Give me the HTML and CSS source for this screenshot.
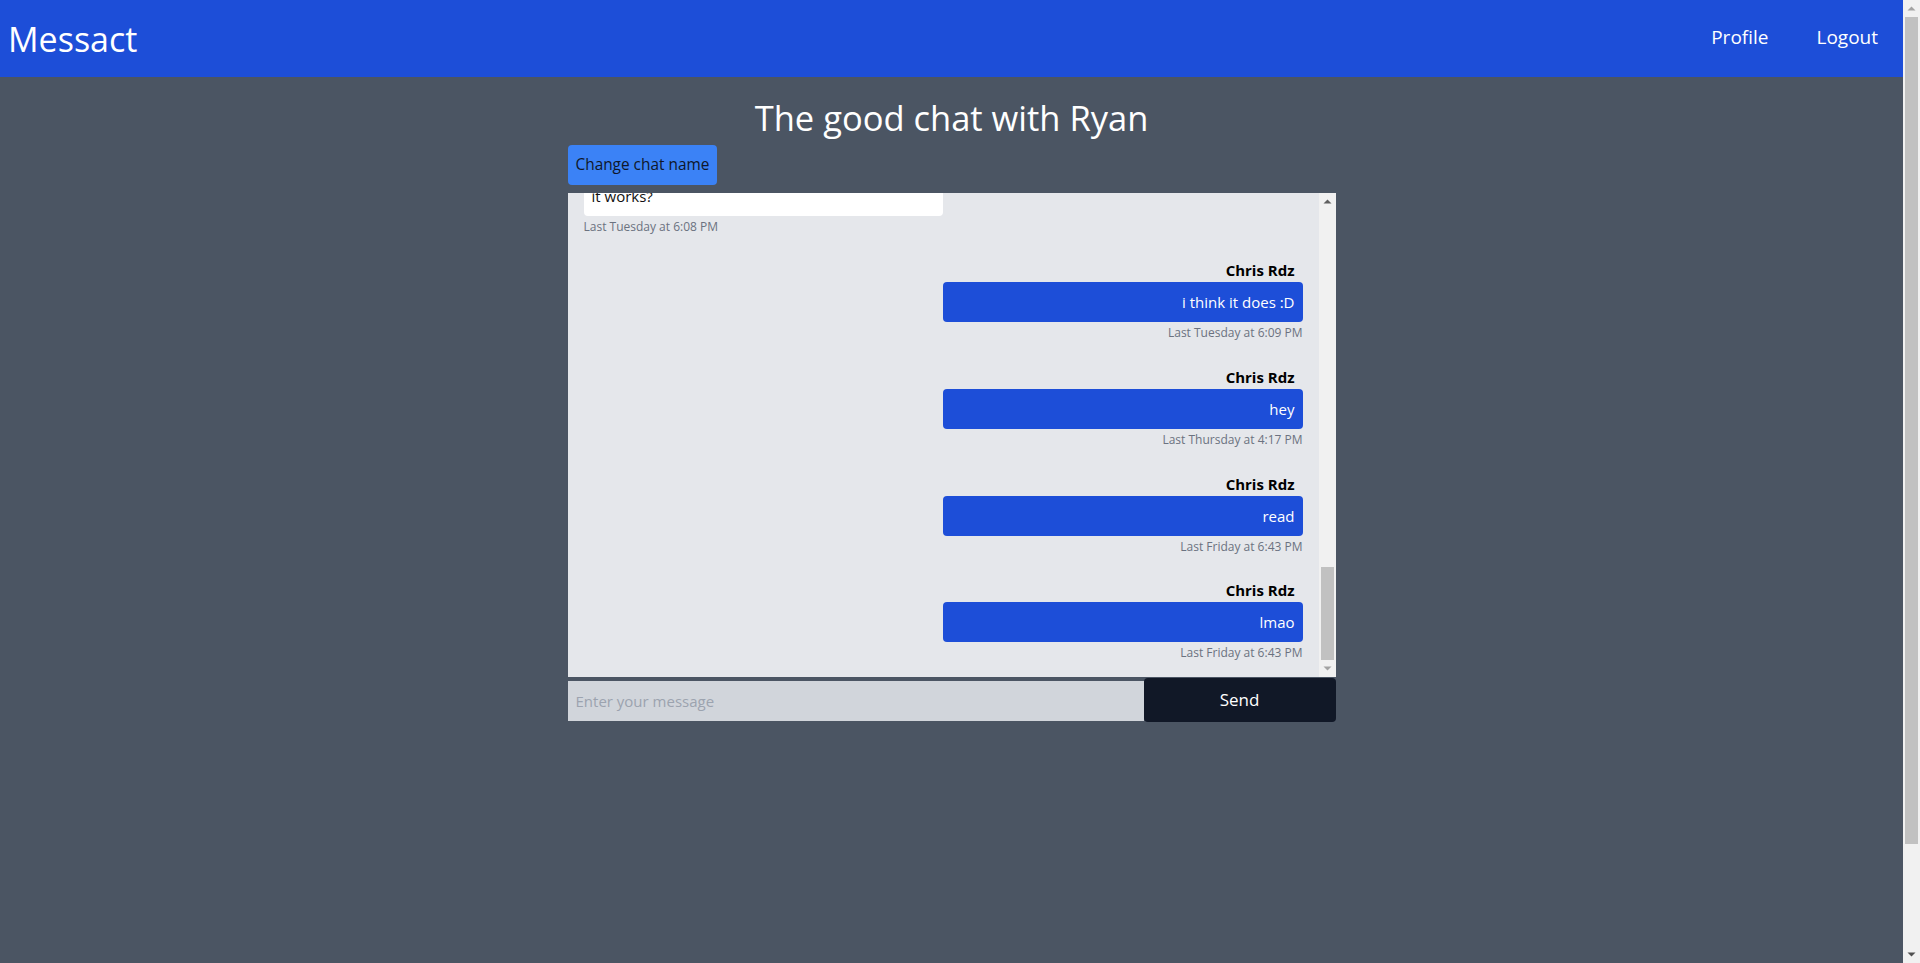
FILE: index.html
```html
<!DOCTYPE html>
<html lang="en">
<head>
<meta charset="utf-8">
<title>Messact</title>
<link rel="stylesheet" href="styles.css">
</head>
<body>
<div class="app">
  <nav class="navbar">
    <a class="brand" href="#">Messact</a>
    <div class="nav-links">
      <a class="nav-link" href="#">Profile</a>
      <a class="nav-link" href="#">Logout</a>
    </div>
  </nav>
  <main class="page">
    <h1 class="chat-title">The good chat with Ryan</h1>
    <section class="chat">
      <button class="rename-btn" type="button">Change chat name</button>
      <div class="messages-frame">
        <div class="messages">
          <div class="messages-inner">
            <div class="msg theirs"><div class="bubble">it works?</div><div class="msg-time">Last Tuesday at 6:08 PM</div></div>
            <div class="msg mine"><div class="msg-name">Chris Rdz</div><div class="bubble">i think it does :D</div><div class="msg-time">Last Tuesday at 6:09 PM</div></div>
            <div class="msg mine"><div class="msg-name">Chris Rdz</div><div class="bubble">hey</div><div class="msg-time">Last Thursday at 4:17 PM</div></div>
            <div class="msg mine"><div class="msg-name">Chris Rdz</div><div class="bubble">read</div><div class="msg-time">Last Friday at 6:43 PM</div></div>
            <div class="msg mine"><div class="msg-name">Chris Rdz</div><div class="bubble">lmao</div><div class="msg-time">Last Friday at 6:43 PM</div></div>
          </div>
        </div>
        <div class="scrollbar inner-bar" aria-hidden="true">
          <svg class="sb-btn" width="17" height="17" viewBox="0 0 17 17"><polygon points="4.5,10.5 8.5,6.5 12.5,10.5" fill="#606060"/></svg>
          <div class="sb-track"></div>
          <div class="sb-thumb inner-thumb"></div>
          <svg class="sb-btn" width="17" height="17" viewBox="0 0 17 17"><polygon points="4.5,6.5 8.5,10.5 12.5,6.5" fill="#a3a3a3"/></svg>
        </div>
      </div>
      <form class="composer">
        <input class="composer-input" type="text" placeholder="Enter your message">
        <button class="send-btn" type="button">Send</button>
      </form>
    </section>
  </main>
</div>
<div class="scrollbar page-bar" aria-hidden="true">
  <svg class="sb-btn" width="17" height="17" viewBox="0 0 17 17"><polygon points="4.5,10.5 8.5,6.5 12.5,10.5" fill="#a3a3a3"/></svg>
  <div class="sb-thumb page-thumb"></div>
  <div class="sb-track"></div>
  <svg class="sb-btn" width="17" height="17" viewBox="0 0 17 17"><polygon points="4.5,6.5 8.5,10.5 12.5,6.5" fill="#505050"/></svg>
</div>
</body>
</html>
```
FILE: styles.css
```css
* { box-sizing: border-box; }

html, body {
  margin: 0;
  padding: 0;
}

body {
  background: #4b5563;
  font-family: "Open Sans", "Noto Sans", "Liberation Sans", sans-serif;
  color: #111827;
  display: flex;
  height: 963px;
  overflow: hidden;
}

.app {
  flex: 1;
  min-width: 0;
  display: flex;
  flex-direction: column;
}

/* drawn scrollbars (classic style) */
.scrollbar {
  width: 17px;
  flex-shrink: 0;
  background: #f1f1f1;
  display: flex;
  flex-direction: column;
}
.sb-btn {
  display: block;
  flex-shrink: 0;
}
.sb-track { flex: 1; }
.sb-thumb {
  flex-shrink: 0;
  margin: 0 2px;
  background: #c1c1c1;
}
.page-thumb { height: 827px; }
.inner-thumb { height: 93px; }

/* navbar */
.navbar {
  height: 77px;
  flex-shrink: 0;
  background: #1d4ed8;
  display: flex;
  align-items: center;
  justify-content: space-between;
  padding-left: 8px;
}
.brand {
  color: #ffffff;
  text-decoration: none;
  font-size: 34px;
  line-height: 40px;
}
.nav-links {
  display: flex;
  align-items: center;
  padding-right: 1px;
}
.nav-link {
  color: #ffffff;
  text-decoration: none;
  font-size: 19px;
  line-height: 28px;
  padding: 0 24px;
  margin-top: -3px;
}

/* page */
.page {
  flex: 1;
}
.chat-title {
  margin: 21px 0 0;
  text-align: center;
  color: #ffffff;
  font-weight: 400;
  font-size: 34.5px;
  line-height: 40px;
}
.chat {
  width: 768px;
  margin: 0 auto;
  display: flex;
  flex-direction: column;
  align-items: flex-start;
}
.rename-btn {
  margin-top: 7px;
  background: #3b82f6;
  color: #0f172a;
  border: none;
  border-radius: 4px;
  padding: 8px;
  font-family: inherit;
  font-size: 15.4px;
  line-height: 24px;
  cursor: pointer;
}

/* messages */
.messages-frame {
  margin-top: 8px;
  width: 100%;
  height: 484px;
  display: flex;
  background: #e5e7eb;
}
.messages {
  flex: 1;
  min-width: 0;
  overflow: hidden;
  display: flex;
  flex-direction: column-reverse;
}
.messages-inner {
  padding: 16px 16px 14px;
  display: flex;
  flex-direction: column;
  gap: 22px;
  flex-shrink: 0;
}
.msg {
  display: flex;
  flex-direction: column;
}
.msg.mine { align-items: flex-end; text-align: right; }
.msg.theirs { align-items: flex-start; text-align: left; }
.msg-name {
  font-weight: 700;
  font-size: 15px;
  line-height: 24px;
  padding: 0 8px;
  color: #000000;
}
.bubble {
  width: 50%;
  padding: 8px;
  border-radius: 4px;
  font-size: 15px;
  line-height: 24px;
}
.mine .bubble {
  background: #1d4ed8;
  color: #ffffff;
}
.theirs .bubble {
  background: #ffffff;
  color: #111111;
}
.msg-time {
  margin-top: 2px;
  font-size: 12px;
  line-height: 18.67px;
  color: #6b7280;
}

/* composer */
.composer {
  width: 100%;
  margin: 1px 0 0;
  display: flex;
  align-items: flex-start;
}
.composer-input {
  width: 75%;
  margin-top: 3px;
  height: 40px;
  border: none;
  border-radius: 0;
  outline: none;
  background: #d1d5db;
  padding: 8px;
  font-family: inherit;
  font-size: 15px;
  line-height: 24px;
  color: #111827;
}
.composer-input::placeholder { color: #9ca3af; }
.send-btn {
  width: 25%;
  height: 44px;
  border: none;
  border-radius: 4px;
  background: #111827;
  color: #ffffff;
  font-family: inherit;
  font-size: 17px;
  line-height: 28px;
  padding: 8px;
  cursor: pointer;
}
```
